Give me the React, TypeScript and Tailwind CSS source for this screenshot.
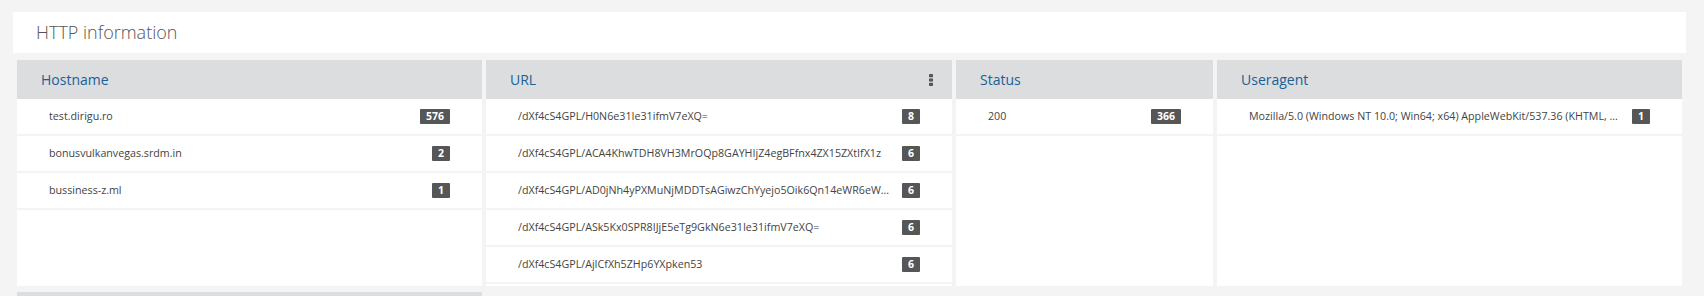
import React from "react";

type Row = { label: string; count: number };
type Panel = { title: string; menu?: boolean; rows: Row[] };

const panels: Panel[] = [
  {
    title: "Hostname",
    rows: [
      { label: "test.dirigu.ro", count: 576 },
      { label: "bonusvulkanvegas.srdm.in", count: 2 },
      { label: "bussiness-z.ml", count: 1 },
    ],
  },
  {
    title: "URL",
    menu: true,
    rows: [
      { label: "/dXf4cS4GPL/H0N6e31Ie31ifmV7eXQ=", count: 8 },
      { label: "/dXf4cS4GPL/ACA4KhwTDH8VH3MrOQp8GAYHIjZ4egBFfnx4ZX15ZXtIfX1z", count: 6 },
      { label: "/dXf4cS4GPL/AD0jNh4yPXMuNjMDDTsAGiwzChYyejo5Oik6Qn14eWR6eWWMfH1+eXQ=", count: 6 },
      { label: "/dXf4cS4GPL/ASk5Kx0SPR8IJjE5eTg9GkN6e31Ie31ifmV7eXQ=", count: 6 },
      { label: "/dXf4cS4GPL/AjICfXh5ZHp6YXpken53", count: 6 },
    ],
  },
  {
    title: "Status",
    rows: [{ label: "200", count: 366 }],
  },
  {
    title: "Useragent",
    rows: [
      {
        label:
          "Mozilla/5.0 (Windows NT 10.0; Win64; x64) AppleWebKit/537.36 (KHTML, like Gecko) Chrome/74.0.3729.169 Safari/537.36",
        count: 1,
      },
    ],
  },
];

function DotsIcon() {
  return (
    <svg width="4" height="12" viewBox="0 0 4 12" className="fill-[#555]">
      <rect x="0" y="0" width="4" height="3.2" rx="0.4" />
      <rect x="0" y="4.4" width="4" height="3.2" rx="0.4" />
      <rect x="0" y="8.8" width="4" height="3.2" rx="0.4" />
    </svg>
  );
}

function Widget({ panel }: { panel: Panel }) {
  return (
    <div className="flex flex-col bg-white pb-[2px] min-w-0">
      {/* header */}
      <div className="h-[39px] bg-[#dcdddf] flex items-center justify-between pl-6 pr-[19px]">
        <span className="text-[14px] text-[#1a6097]">{panel.title}</span>
        {panel.menu && <DotsIcon />}
      </div>
      {/* rows */}
      {panel.rows.map((r, i) => (
        <div
          key={i}
          className="h-[37px] border-b-2 border-[#f4f4f4] flex items-center pl-8 pr-8"
        >
          <span className="flex-1 min-w-0 truncate text-[10.7px] text-[#444]">{r.label}</span>
          <span className="min-w-[30px] flex justify-end shrink-0">
            <span className="bg-[#565656] text-white font-bold text-[10.5px] leading-[11px] px-[6px] py-[2px] rounded-[1px]">
              {r.count}
            </span>
          </span>
        </div>
      ))}
    </div>
  );
}

export default function App() {
  return (
    <div className="w-full h-[296px] overflow-hidden bg-[#f4f4f4] pt-3 font-['Open_Sans',sans-serif]">
      {/* Title */}
      <div className="ml-[13px] mr-[18px] h-[41px] bg-white flex items-center pl-[23px]">
        <h2 className="text-[18px] font-light text-[#555]">HTTP information</h2>
      </div>

      {/* Widgets */}
      <div className="ml-[17px] mt-[7px] grid grid-cols-[465px_466px_257px_465px] gap-x-1 gap-y-[6px]">
        {panels.map((p) => (
          <Widget key={p.title} panel={p} />
        ))}
        <div className="h-[38px] bg-[#dcdddf]" />
      </div>
    </div>
  );
}
